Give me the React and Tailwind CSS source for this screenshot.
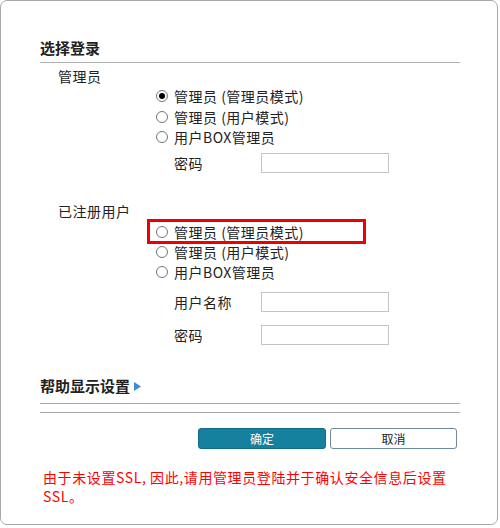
import React from "react";

const font = { fontFamily: '"Noto Sans CJK SC", "Noto Sans", sans-serif' };

function Radio({ checked, label }) {
  return (
    <div className="flex items-center h-[20px] pl-[116px]">
      <span className="w-[12px] h-[12px] rounded-full border border-[#767676] bg-white flex items-center justify-center">
        {checked && <span className="w-[6px] h-[6px] rounded-full bg-black" />}
      </span>
      <span className="ml-[6px] text-[14px] leading-[20px] text-[#222] tracking-[0.5px]">{label}</span>
    </div>
  );
}

function Field({ label }) {
  return (
    <div className="flex items-center h-[20px] pl-[134px]">
      <span className="w-[87px] text-[14px] leading-[20px] text-[#222] tracking-[0.5px]">{label}</span>
      <span className="w-[128px] h-[20px] border border-[#c4c4c4] bg-white" />
    </div>
  );
}

export default function App() {
  return (
    <div className="w-[500px] h-[528px] bg-white" style={font}>
      <div className="w-[498px] h-[525px] border border-[#a9a9a9] rounded-[7px] bg-white pl-[39px] pt-[37px]">
        <div className="text-[15px] leading-[20px] font-bold text-[#222]">选择登录</div>
        <div className="w-[420px] h-px bg-[#b0b0b0] mt-[4px]" />
        <div className="pl-[18px] mt-[3px] text-[14px] leading-[20px] text-[#222] tracking-[0.5px]">管理员</div>
        <div className="mt-0 flex flex-col gap-[0.5px]">
          <Radio checked label="管理员 (管理员模式)" />
          <Radio label="管理员 (用户模式)" />
          <Radio label="用户BOX管理员" />
        </div>
        <div className="mt-[6px]">
          <Field label="密码" />
        </div>
        <div className="pl-[18px] mt-[28px] text-[14px] leading-[20px] text-[#222] tracking-[0.5px]">已注册用户</div>
        <div className="mt-[1px] flex flex-col">
          <div className="relative">
            <Radio label="管理员 (管理员模式)" />
            <div className="absolute left-[107px] top-[-3px] w-[219px] h-[25px] border-[3px] border-[#ee0000]" />
          </div>
          <Radio label="管理员 (用户模式)" />
          <Radio label="用户BOX管理员" />
        </div>
        <div className="mt-[10px]">
          <Field label="用户名称" />
        </div>
        <div className="mt-[13px]">
          <Field label="密码" />
        </div>
        <div className="mt-[31px] flex items-center h-[20px]">
          <span className="text-[15px] leading-[20px] font-bold text-[#222]">帮助显示设置</span>
          <svg width="7" height="9" viewBox="0 0 7 9" className="ml-[4px] mt-[1px]">
            <path d="M0 0 L7 4.5 L0 9 Z" fill="#3b8ed6" />
          </svg>
        </div>
        <div className="w-[420px] h-px bg-[#a8a8a8] mt-[7px]" />
        <div className="w-[420px] h-px bg-[#a8a8a8] mt-[8px]" />
        <div className="flex mt-[15px] pl-[158px] gap-[4px]">
          <div className="w-[128px] h-[21px] rounded-[3px] bg-[#16809f] border border-[#0f6b88] flex items-center justify-center text-white text-[12px]">确定</div>
          <div className="w-[127px] h-[21px] rounded-[3px] bg-white border border-[#6f8a99] flex items-center justify-center text-[#222] text-[12px]">取消</div>
        </div>
        <div className="mt-[19px] pl-[3px] w-[430px] text-[14px] leading-[19px] text-[#ff0000] tracking-[0.6px]">
          由于未设置SSL, 因此,请用管理员登陆并于确认安全信息后设置<br />SSL。
        </div>
      </div>
    </div>
  );
}
